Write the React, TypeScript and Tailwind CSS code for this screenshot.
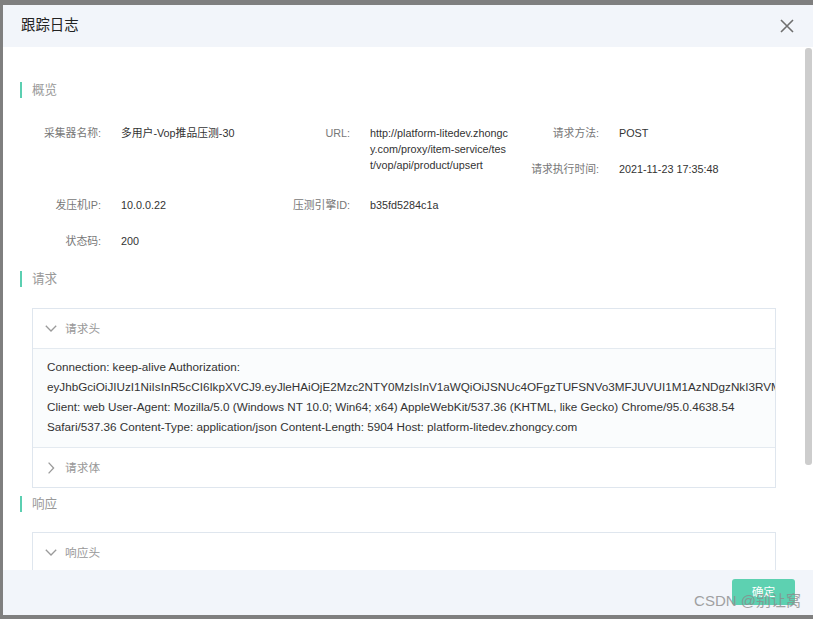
import React from 'react';

const token =
  'eyJhbGciOiJIUzI1NiIsInR5cCI6IkpXVCJ9.eyJleHAiOjE2Mzc2NTY0MzIsInV1aWQiOiJSNUc4OFgzTUFSNVo3MFJUVUI1M1AzNDgzNkI3RVMiLCJ1c2VybmFtZSI6InRlc3QifQ';

const requestHeaders = `Connection: keep-alive Authorization: ${token} Client: web User-Agent: Mozilla/5.0 (Windows NT 10.0; Win64; x64) AppleWebKit/537.36 (KHTML, like Gecko) Chrome/95.0.4638.54 Safari/537.36 Content-Type: application/json Content-Length: 5904 Host: platform-litedev.zhongcy.com`;

const ChevronDown = () => (
  <svg width="12" height="7" viewBox="0 0 12 7" fill="none" className="shrink-0">
    <path d="M0.8 0.8 L6 6 L11.2 0.8" stroke="#9a9a9a" strokeWidth="1.3" />
  </svg>
);

const ChevronRight = () => (
  <svg width="12" height="12" viewBox="0 0 12 12" fill="none" className="shrink-0">
    <path d="M3.6 0.6 L8.6 6 L3.6 11.4" stroke="#9a9a9a" strokeWidth="1.3" />
  </svg>
);

const SectionTitle = ({ title }: { title: string }) => (
  <div className="flex items-center h-[16px]">
    <div className="w-[2px] h-[16px] bg-[#5bcfb1]" />
    <span className="ml-[10px] text-[12.6px] leading-[16px] text-[#999]">{title}</span>
  </div>
);

const Field = ({ label, children }: { label: string; children: React.ReactNode }) => (
  <div className="flex">
    <div className="w-[69px] shrink-0 text-right text-[#777] whitespace-nowrap">{label}</div>
    <div className="ml-[20px] text-[#333]">{children}</div>
  </div>
);

const PanelRow = ({ open, title }: { open: boolean; title: string }) => (
  <div className="h-[39px] flex items-center pl-[12px] text-[11.7px] text-[#999]">
    {open ? <ChevronDown /> : <ChevronRight />}
    <span className="ml-[8px]">{title}</span>
  </div>
);

export default function App() {
  return (
    <div
      className="w-[813px] h-[619px] bg-[#7f7f7f] pt-[5px] pl-[3px] overflow-hidden"
      style={{ fontFamily: '"Liberation Sans", Arial, "Noto Sans CJK SC", sans-serif' }}
    >
      <div className="relative w-[810px] h-[610px] bg-white flex flex-col">
        {/* header */}
        <div className="h-[42px] shrink-0 bg-[#f2f5fa] flex items-center justify-between pl-[18px] pr-[19px]">
          <span className="text-[14.4px] text-[#222]">跟踪日志</span>
          <svg width="14" height="14" viewBox="0 0 14 14" fill="none">
            <path d="M1 1 L13 13 M13 1 L1 13" stroke="#6f6f6f" strokeWidth="1.6" />
          </svg>
        </div>

        {/* body */}
        <div className="relative flex-1 overflow-hidden pl-[17px] pt-[35px]">
          <SectionTitle title="概览" />

          <div className="mt-[27px] ml-[12px] grid grid-cols-[249px_249px_249px] gap-y-[20px] text-[10.8px] leading-[16px]">
            <Field label="采集器名称:">多用户-Vop推品压测-30</Field>
            <Field label="URL:">
              <div className="w-[139px] break-all">
                http://platform-litedev.zhongcy.com/proxy/item-service/test/vop/api/product/upsert
              </div>
            </Field>
            <div className="flex flex-col gap-[20px]">
              <Field label="请求方法:">POST</Field>
              <Field label="请求执行时间:">2021-11-23 17:35:48</Field>
            </div>

            <Field label="发压机IP:">10.0.0.22</Field>
            <Field label="压测引擎ID:">b35fd5284c1a</Field>
            <div />

            <Field label="状态码:">200</Field>
          </div>

          <div className="mt-[22px]">
            <SectionTitle title="请求" />
          </div>

          <div className="mt-[21px] ml-[12px] w-[744px] border border-[#dfe6ee] overflow-hidden">
            <div className="border-b border-[#e4eaf0]">
              <PanelRow open title="请求头" />
            </div>
            <div className="bg-[#fafcfd] px-[14px] pt-[8px] pb-[10px] text-[11.7px] leading-[20px] text-[#333] border-b border-[#e4eaf0]">
              {requestHeaders}
            </div>
            <PanelRow open={false} title="请求体" />
          </div>

          <div className="mt-[8px]">
            <SectionTitle title="响应" />
          </div>

          <div className="mt-[20px] ml-[12px] w-[744px] border border-[#dfe6ee]">
            <div className="border-b border-[#e4eaf0]">
              <PanelRow open title="响应头" />
            </div>
            <div className="h-[60px] bg-[#fafcfd]" />
          </div>

          {/* scrollbar thumb */}
          <div className="absolute right-[1px] top-[1px] w-[7px] h-[417px] rounded-[3px] bg-[#cdcdcd]" />
        </div>

        {/* footer */}
        <div className="h-[45px] shrink-0 bg-[#f2f5fa] flex items-start justify-end pt-[9px] pr-[18px]">
          <button className="w-[63px] h-[26px] rounded-[3px] bg-[#5dd1b1] text-white text-[11.7px]">
            确定
          </button>
        </div>

        {/* watermark */}
        <div className="absolute right-[12px] bottom-[3px] text-[15px] text-[#8c8c8c] opacity-80 pointer-events-none">
          CSDN @别让窝
        </div>
      </div>
    </div>
  );
}
